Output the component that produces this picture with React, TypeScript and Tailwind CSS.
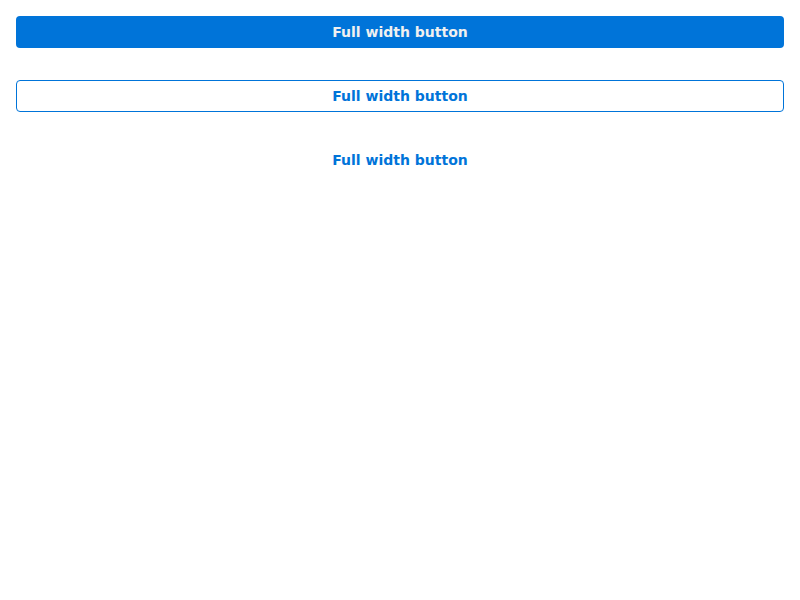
import React from "react";

const App: React.FC = () => {
  return (
    <div
      className="flex flex-col gap-8 p-4"
      style={{ fontFamily: '"DejaVu Sans", sans-serif' }}
    >
      <button
        type="button"
        className="w-full h-8 rounded bg-[#0074d9] text-[#f0f0f0] text-sm font-bold"
      >
        Full width button
      </button>
      <button
        type="button"
        className="w-full h-8 rounded border border-[#0074d9] bg-white text-[#0074d9] text-sm font-bold"
      >
        Full width button
      </button>
      <button
        type="button"
        className="w-full h-8 rounded bg-transparent text-[#0074d9] text-sm font-bold"
      >
        Full width button
      </button>
    </div>
  );
};

export default App;
